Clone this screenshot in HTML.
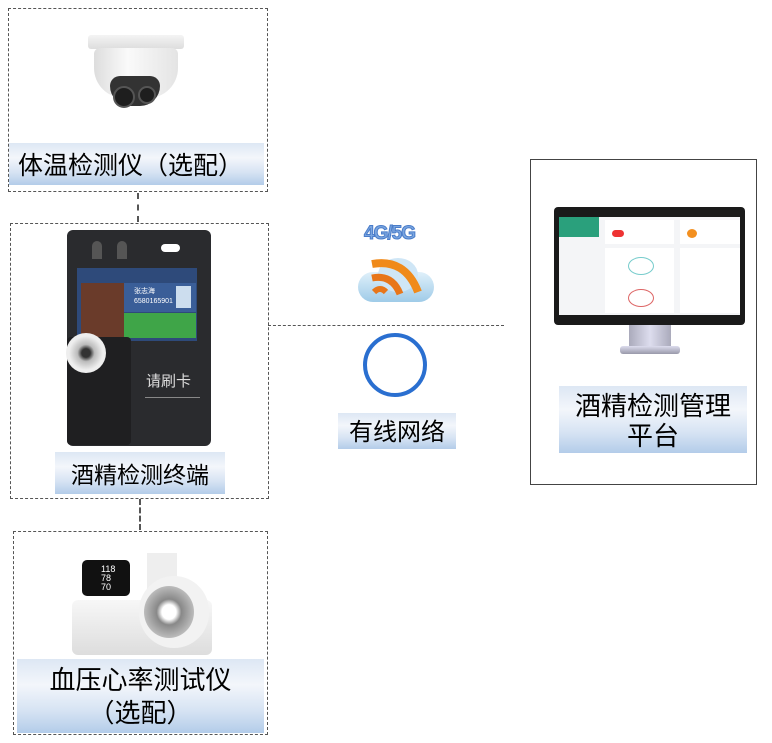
<!DOCTYPE html>
<html><head><meta charset="utf-8"><style>
*{margin:0;padding:0;box-sizing:border-box}
body{width:772px;height:743px;background:#fff;position:relative;overflow:hidden;font-family:"Liberation Sans","Noto Sans CJK SC",sans-serif;color:#000}
.a{position:absolute}
.dash{border:1px dashed #555}
.lbl{position:absolute;background:linear-gradient(#dde7f4,#f3f6fb 35%,#d6e3f3 70%,#b3cce9);text-align:center;font-size:25px;line-height:30px;white-space:nowrap}
</style></head><body>
<!-- box1 -->
<div class="a dash" style="left:8px;top:8px;width:260px;height:184px"></div>
<div class="a" style="left:88px;top:35px;width:96px;height:14px;background:linear-gradient(#f4f4f4,#ddd);border-radius:3px"></div>
<div class="a" style="left:94px;top:48px;width:84px;height:50px;background:linear-gradient(90deg,#ddd,#fafafa 40%,#e4e4e4);border-radius:6px 6px 30px 30px"></div>
<div class="a" style="left:110px;top:76px;width:50px;height:30px;background:#333;border-radius:10px 10px 20px 20px"></div>
<div class="a" style="left:113px;top:86px;width:22px;height:22px;background:#1e1e1e;border-radius:50%;border:2px solid #555"></div>
<div class="a" style="left:138px;top:86px;width:18px;height:18px;background:#1e1e1e;border-radius:50%;border:2px solid #555"></div>
<div class="lbl" style="left:9px;top:143px;width:255px;height:42px;line-height:46px;text-align:left;padding-left:9px;font-size:25px">体温检测仪（选配）</div>
<div class="a" style="left:137px;top:193px;height:29px;border-left:2px dashed #555"></div>
<!-- box2 -->
<div class="a dash" style="left:10px;top:223px;width:259px;height:276px"></div>
<div class="a" style="left:67px;top:230px;width:144px;height:216px;background:#2a2b2e;border-radius:6px"></div>
<div class="a" style="left:92px;top:241px;width:10px;height:18px;background:#555;border-radius:5px 5px 0 0"></div>
<div class="a" style="left:117px;top:241px;width:10px;height:18px;background:#555;border-radius:5px 5px 0 0"></div>
<div class="a" style="left:161px;top:244px;width:19px;height:8px;background:#fff;border-radius:4px"></div>
<div class="a" style="left:77px;top:268px;width:120px;height:73px;background:#2e4a7a"></div>
<div class="a" style="left:81px;top:283px;width:43px;height:55px;background:#6a3b2a"></div>
<div class="a" style="left:124px;top:283px;width:72px;height:29px;background:#3a5e98;color:#fff;font-size:7px;padding:4px 0 0 10px;line-height:10px">张志海<br>6580165901</div>
<div class="a" style="left:176px;top:286px;width:15px;height:22px;background:#cde"></div>
<div class="a" style="left:124px;top:313px;width:72px;height:25px;background:#3fa548"></div>
<div class="a" style="left:67px;top:337px;width:64px;height:108px;background:#1f1f21;border-radius:4px"></div>
<div class="a" style="left:66px;top:333px;width:40px;height:40px;background:radial-gradient(#333 15%,#bbb 30%,#eee 60%);border-radius:50%"></div>
<div class="a" style="left:146px;top:370px;color:#ddd;font-size:15px">请刷卡</div>
<div class="a" style="left:145px;top:397px;width:55px;border-top:1px solid #888"></div>
<div class="lbl" style="left:55px;top:452px;width:170px;height:42px;line-height:46px;font-size:23px">酒精检测终端</div>
<div class="a" style="left:139px;top:499px;height:31px;border-left:2px dashed #555"></div>
<!-- box3 -->
<div class="a dash" style="left:13px;top:531px;width:255px;height:204px"></div>
<div class="a" style="left:72px;top:600px;width:140px;height:55px;background:linear-gradient(#f7f7f7,#ddd);border-radius:6px"></div>
<div class="a" style="left:82px;top:560px;width:48px;height:36px;background:#111;border-radius:5px"></div>
<div class="a" style="left:101px;top:565px;color:#fff;font-size:9px;line-height:9px">118<br>78<br>70</div>
<div class="a" style="left:147px;top:553px;width:30px;height:40px;background:#eee"></div>
<div class="a" style="left:139px;top:576px;width:70px;height:72px;background:#f2f2f2;border-radius:35px"></div>
<div class="a" style="left:144px;top:586px;width:50px;height:52px;background:radial-gradient(#fff 20%,#888 35%,#bbb 70%);border-radius:50%"></div>
<div class="lbl" style="left:17px;top:659px;width:247px;height:74px;line-height:33px;padding-top:5px;font-size:26px">血压心率测试仪<br>（选配）</div>
<!-- middle -->
<div class="a" style="left:268px;top:325px;width:236px;border-top:1px dashed #555"></div>
<div class="a" style="left:364px;top:223px;font-size:19px;font-weight:bold;color:#7aa6e0;-webkit-text-stroke:1px #4a7cc9;letter-spacing:-1px">4G/5G</div>
<div class="a" style="left:358px;top:272px;width:76px;height:30px;background:linear-gradient(#dff0fa,#9fcbe8);border-radius:15px"></div>
<div class="a" style="left:378px;top:258px;width:40px;height:34px;background:#cfe6f6;border-radius:50%"></div>
<svg class="a" style="left:360px;top:250px" width="70" height="50" viewBox="0 0 70 50">
<path d="M12 14 Q45 8 58 42" stroke="#f08a1a" stroke-width="8" fill="none"/>
<path d="M12 28 Q32 24 40 44" stroke="#e8761a" stroke-width="7" fill="none"/>
<path d="M14 42 Q20 36 26 42" stroke="#e8761a" stroke-width="6" fill="none"/>
</svg>
<div class="a" style="left:363px;top:333px;width:64px;height:64px;border:4px solid #2a6fd0;border-radius:50%"></div>
<div class="lbl" style="left:338px;top:413px;width:118px;height:36px;line-height:40px;font-size:24px">有线网络</div>
<!-- right -->
<div class="a" style="left:530px;top:159px;width:227px;height:326px;border:1px solid #444"></div>
<div class="a" style="left:554px;top:207px;width:191px;height:118px;background:#1a1a1a;border-radius:4px"></div>
<div class="a" style="left:559px;top:217px;width:181px;height:98px;background:#f4f5f7"></div>
<div class="a" style="left:559px;top:217px;width:40px;height:20px;background:#2aa07c"></div>
<div class="a" style="left:605px;top:220px;width:69px;height:24px;background:#fff"></div>
<div class="a" style="left:680px;top:220px;width:60px;height:24px;background:#fff"></div>
<div class="a" style="left:605px;top:248px;width:69px;height:65px;background:#fff"></div>
<div class="a" style="left:680px;top:248px;width:60px;height:65px;background:#fff"></div>
<div class="a" style="left:628px;top:257px;width:26px;height:18px;border:1px solid #7cc;border-radius:50%"></div>
<div class="a" style="left:628px;top:289px;width:26px;height:18px;border:1px solid #d66;border-radius:50%"></div>
<div class="a" style="left:612px;top:230px;width:12px;height:7px;background:#e33;border-radius:4px"></div>
<div class="a" style="left:687px;top:229px;width:10px;height:9px;background:#f39020;border-radius:50%"></div>
<div class="a" style="left:629px;top:325px;width:42px;height:22px;background:linear-gradient(90deg,#aab,#dde,#aab)"></div>
<div class="a" style="left:620px;top:346px;width:60px;height:8px;background:linear-gradient(#dde,#99a);border-radius:3px"></div>
<div class="lbl" style="left:559px;top:386px;width:188px;height:67px;line-height:30px;padding-top:5px;font-size:26px">酒精检测管理<br>平台</div>
</body></html>
